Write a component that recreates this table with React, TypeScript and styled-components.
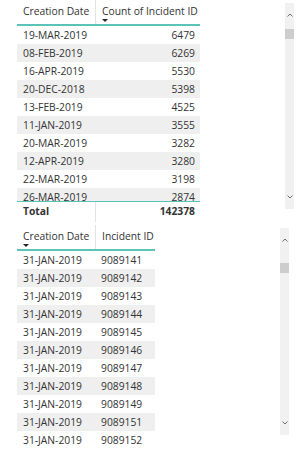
import React from 'react';
import styled, { createGlobalStyle } from 'styled-components';

const colors = {
  text: '#333333',
  stripe: '#efefef',
  accent: '#5cc3b8',
  divider: '#e3e3e3',
  track: '#f1f1f1',
  thumb: '#cdcdcd',
  arrow: '#6f6f6f',
};

const GlobalStyle = createGlobalStyle`
  html, body {
    margin: 0;
    padding: 0;
    background: #ffffff;
  }
  body {
    font-family: "Open Sans", "Noto Sans", sans-serif;
    font-size: 10.3px;
    color: ${colors.text};
  }
`;

const Page = styled.div`
  display: flex;
  flex-direction: column;
  width: 300px;
  height: 466px;
  padding-left: 17px;
  box-sizing: border-box;
  overflow: hidden;
`;

const Visual = styled.section<{ $width: number; $height: number; $top: number }>`
  display: flex;
  justify-content: space-between;
  align-items: flex-start;
  width: ${p => p.$width}px;
  height: ${p => p.$height}px;
  margin-top: ${p => p.$top}px;
  flex: none;
`;

const Table = styled.div<{ $cols: string }>`
  display: flex;
  flex-direction: column;
  width: max-content;

  --cols: ${p => p.$cols};
`;

const HeaderRow = styled.div`
  display: grid;
  grid-template-columns: var(--cols);
  height: 24px;
  border-bottom: 2px solid ${colors.accent};
`;

const HeaderCell = styled.div`
  position: relative;
  padding: 4px 6px 0;
  line-height: 15px;
  white-space: nowrap;
  border-left: 1px solid ${colors.divider};

  &:first-child {
    border-left: none;
  }
`;

const SortArrow = styled.span`
  position: absolute;
  left: 6px;
  top: 19px;
  width: 0;
  height: 0;
  border-left: 3px solid transparent;
  border-right: 3px solid transparent;
  border-top: 3px solid #252525;
`;

const Body = styled.div<{ $height: number }>`
  height: ${p => p.$height}px;
  overflow: hidden;
`;

const Row = styled.div<{ $striped: boolean }>`
  display: grid;
  grid-template-columns: var(--cols);
  height: 18px;
  line-height: 18px;
  background: ${p => (p.$striped ? colors.stripe : 'transparent')};
`;

const Cell = styled.div<{ $align?: 'left' | 'right' }>`
  padding: 0 ${p => (p.$align === 'right' ? '5px' : '6px')};
  text-align: ${p => p.$align ?? 'left'};
  white-space: nowrap;
  overflow: hidden;
`;

const TotalRow = styled.div`
  display: grid;
  grid-template-columns: var(--cols);
  height: 20px;
  line-height: 19px;
  border-top: 1.5px solid ${colors.accent};
  font-weight: 700;
`;

const TotalCell = styled(Cell)`
  border-left: 1px solid ${colors.divider};

  &:first-child {
    border-left: none;
  }
`;

const Track = styled.div<{ $top: number; $height: number }>`
  display: flex;
  flex-direction: column;
  width: 9px;
  height: ${p => p.$height}px;
  margin-top: ${p => p.$top}px;
  background: ${colors.track};
`;

const ArrowButton = styled.div`
  display: flex;
  align-items: center;
  justify-content: center;
  height: 24px;
  flex: none;
`;

const Thumb = styled.div<{ $offset: number }>`
  height: 10px;
  margin-top: ${p => p.$offset}px;
  background: ${colors.thumb};
`;

const Spacer = styled.div`
  flex: 1;
`;

const Chevron = ({ up }: { up?: boolean }) => (
  <svg width="6" height="4" viewBox="0 0 6 4" fill="none">
    <path
      d={up ? 'M0.5 3.5 L3 1 L5.5 3.5' : 'M0.5 0.5 L3 3 L5.5 0.5'}
      stroke={colors.arrow}
      strokeWidth="1"
    />
  </svg>
);

const ScrollBar = ({ top, height, thumbOffset }: { top: number; height: number; thumbOffset: number }) => (
  <Track $top={top} $height={height}>
    <ArrowButton>
      <Chevron up />
    </ArrowButton>
    <Thumb $offset={thumbOffset} />
    <Spacer />
    <ArrowButton>
      <Chevron />
    </ArrowButton>
  </Track>
);

const summary: Array<[string, number]> = [
  ['19-MAR-2019', 6479],
  ['08-FEB-2019', 6269],
  ['16-APR-2019', 5530],
  ['20-DEC-2018', 5398],
  ['13-FEB-2019', 4525],
  ['11-JAN-2019', 3555],
  ['20-MAR-2019', 3282],
  ['12-APR-2019', 3280],
  ['22-MAR-2019', 3198],
  ['26-MAR-2019', 2874],
];

const incidents = ['9089141', '9089142', '9089143', '9089144', '9089145', '9089146', '9089147', '9089148', '9089149', '9089151', '9089152'];

export default function App() {
  return (
    <>
      <GlobalStyle />
      <Page>
        <Visual $width={277} $height={222} $top={0}>
          <Table $cols="78px 105px">
            <HeaderRow>
              <HeaderCell>Creation Date</HeaderCell>
              <HeaderCell>
                Count of Incident ID
                <SortArrow />
              </HeaderCell>
            </HeaderRow>
            <Body $height={175}>
              {summary.map(([date, count], i) => (
                <Row key={date} $striped={i % 2 === 1}>
                  <Cell>{date}</Cell>
                  <Cell $align="right">{count}</Cell>
                </Row>
              ))}
            </Body>
            <TotalRow>
              <TotalCell>Total</TotalCell>
              <TotalCell $align="right">142378</TotalCell>
            </TotalRow>
          </Table>
          <ScrollBar top={3} height={206} thumbOffset={2} />
        </Visual>

        <Visual $width={272} $height={241} $top={3}>
          <Table $cols="78px 60px">
            <HeaderRow>
              <HeaderCell>
                Creation Date
                <SortArrow />
              </HeaderCell>
              <HeaderCell>Incident ID</HeaderCell>
            </HeaderRow>
            <Body $height={198}>
              {incidents.map((id, i) => (
                <Row key={id} $striped={i % 2 === 1}>
                  <Cell>31-JAN-2019</Cell>
                  <Cell>{id}</Cell>
                </Row>
              ))}
            </Body>
          </Table>
          <ScrollBar top={3} height={207} thumbOffset={11} />
        </Visual>
      </Page>
    </>
  );
}
